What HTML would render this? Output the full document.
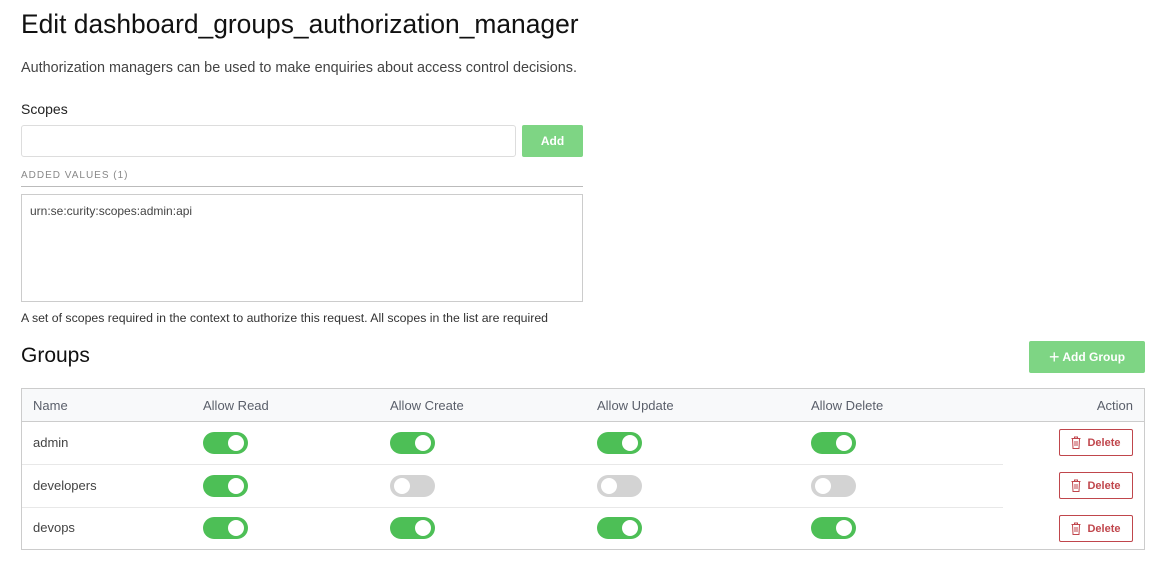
<!DOCTYPE html>
<html><head><meta charset="utf-8"><style>
*{box-sizing:border-box;margin:0;padding:0}
body{width:1158px;height:564px;background:#fff;font-family:"Liberation Sans",sans-serif;color:#222;position:relative;overflow:hidden}
.a{position:absolute}
.t{position:absolute;width:45px;height:22px;border-radius:11px;background:#4dbf56}
.t::after{content:"";position:absolute;top:3px;right:4px;width:16px;height:16px;border-radius:50%;background:#fff}
.t.off{background:#d3d3d3}
.t.off::after{right:auto;left:4px}
.del{position:absolute;left:1059px;width:74px;height:27px;border:1px solid #c0464c;border-radius:2px;color:#c0464c;font-size:11px;font-weight:bold;display:flex;align-items:center;justify-content:center;gap:6px;background:#fff}
.hd{font-size:13px;color:#5a5f6a;position:absolute;top:398px}
.nm{font-size:13px;color:#444;position:absolute;left:33px}
.ln{position:absolute;left:22px;width:981px;height:1px;background:#e8e8e8}
</style></head><body>
<div class="a" style="left:21px;top:9px;font-size:26.4px;color:#111">Edit dashboard_groups_authorization_manager</div>
<div class="a" style="left:21px;top:60px;font-size:14.4px;color:#444">Authorization managers can be used to make enquiries about access control decisions.</div>
<div class="a" style="left:21px;top:101px;font-size:14px;color:#222">Scopes</div>
<div class="a" style="left:21px;top:125px;width:495px;height:32px;border:1px solid #ddd;border-radius:3px"></div>
<div class="a" style="left:522px;top:125px;width:61px;height:32px;background:#7ed584;border-radius:2px;color:#fff;font-size:12px;font-weight:bold;text-align:center;line-height:32px">Add</div>
<div class="a" style="left:21px;top:170px;font-size:10px;color:#888;letter-spacing:1px">ADDED VALUES (1)</div>
<div class="a" style="left:21px;top:186px;width:562px;height:1px;background:#bbb"></div>
<div class="a" style="left:21px;top:194px;width:562px;height:108px;border:1px solid #ccc"></div>
<div class="a" style="left:30px;top:204px;font-size:12px;color:#444">urn:se:curity:scopes:admin:api</div>
<div class="a" style="left:21px;top:311px;font-size:12.3px;color:#333">A set of scopes required in the context to authorize this request. All scopes in the list are required</div>
<div class="a" style="left:21px;top:344px;font-size:21px;color:#111">Groups</div>
<div class="a" style="left:1029px;top:341px;width:116px;height:32px;background:#7ed584;border-radius:2px;color:#fff;font-size:12px;font-weight:bold;text-align:center;line-height:32px"><span style="font-size:18px;font-weight:normal;vertical-align:-2px">+</span> Add Group</div>
<div class="a" style="left:21px;top:388px;width:1124px;height:162px;border:1px solid #ccc"></div>
<div class="a" style="left:22px;top:389px;width:1122px;height:33px;background:#f8f9fa;border-bottom:1px solid #ccc"></div>
<div class="hd" style="left:33px">Name</div>
<div class="hd" style="left:203px">Allow Read</div>
<div class="hd" style="left:390px">Allow Create</div>
<div class="hd" style="left:597px">Allow Update</div>
<div class="hd" style="left:811px">Allow Delete</div>
<div class="hd" style="left:1093px;width:40px;text-align:right">Action</div>
<div class="ln" style="top:464px"></div>
<div class="ln" style="top:507px"></div>
<div class="nm" style="top:435px">admin</div>
<div class="nm" style="top:478px">developers</div>
<div class="nm" style="top:520px">devops</div>
<div class="t" style="left:203px;top:432px"></div><div class="t" style="left:390px;top:432px"></div><div class="t" style="left:597px;top:432px"></div><div class="t" style="left:811px;top:432px"></div>
<div class="t" style="left:203px;top:475px"></div><div class="t off" style="left:390px;top:475px"></div><div class="t off" style="left:597px;top:475px"></div><div class="t off" style="left:811px;top:475px"></div>
<div class="t" style="left:203px;top:517px"></div><div class="t" style="left:390px;top:517px"></div><div class="t" style="left:597px;top:517px"></div><div class="t" style="left:811px;top:517px"></div>
<div class="del" style="top:429px"><svg width="10" height="13" viewBox="0 0 10 13" fill="none" stroke="#c0464c" stroke-width="1"><path d="M0.5 2.5h9M3.5 2.5V1h3v1.5M1.5 2.5l.5 10h6l.5-10M4 5v5M6 5v5"/></svg>Delete</div>
<div class="del" style="top:472px"><svg width="10" height="13" viewBox="0 0 10 13" fill="none" stroke="#c0464c" stroke-width="1"><path d="M0.5 2.5h9M3.5 2.5V1h3v1.5M1.5 2.5l.5 10h6l.5-10M4 5v5M6 5v5"/></svg>Delete</div>
<div class="del" style="top:515px"><svg width="10" height="13" viewBox="0 0 10 13" fill="none" stroke="#c0464c" stroke-width="1"><path d="M0.5 2.5h9M3.5 2.5V1h3v1.5M1.5 2.5l.5 10h6l.5-10M4 5v5M6 5v5"/></svg>Delete</div>
</body></html>
